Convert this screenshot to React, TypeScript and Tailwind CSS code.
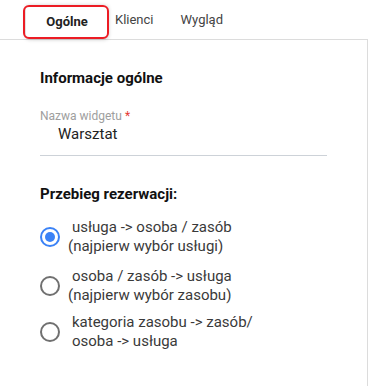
export default function App() {
  return (
    <div className="relative w-[369px] h-[386px] bg-white font-['Roboto',sans-serif] overflow-hidden">
      <div className="flex items-start h-[39px] pl-[26px]">
        <div className="mt-[5px] w-[82px] h-[33px] flex items-center justify-center rounded-[4px] shadow-[0_1px_4px_rgba(0,0,0,0.28)] text-[13px] font-bold text-[#222]">
          Ogólne
        </div>
        <div className="ml-[7px] h-[39px] flex items-center text-[13px] text-[#444]">Klienci</div>
        <div className="ml-[27px] h-[39px] flex items-center text-[13px] text-[#444]">Wygląd</div>
      </div>
      <div className="absolute left-[23px] top-[5px] w-[86px] h-[34px] border-2 border-[#ec1c24] rounded-[6px]" />

      <div className="w-[368px] h-[347px] border-t border-r border-[#dcdcdc] pl-[40px] pt-[28px]">
        <div className="text-[15px] leading-[20px] font-bold text-[#111]">Informacje ogólne</div>

        <div className="mt-[20px] w-[287px] border-b border-[#cdd2d8] pb-[11px]">
          <div className="text-[12px] leading-[16px] text-[#9e9e9e]">
            Nazwa widgetu <span className="text-[#e53935]">*</span>
          </div>
          <div className="ml-[18px] text-[15px] leading-[20px] text-[#222]">Warsztat</div>
        </div>

        <div className="mt-[28px] text-[15px] leading-[20px] font-bold text-[#111]">Przebieg rezerwacji:</div>

        <div className="mt-[14px] flex items-center">
          <div className="w-[20px] h-[20px] rounded-full border-2 border-[#3b82f6] flex items-center justify-center">
            <div className="w-[10px] h-[10px] rounded-full bg-[#3b82f6]" />
          </div>
          <div className="ml-[8px] text-[15px] leading-[19px] text-[#3a3a3a]">
            <div className="ml-[4px]">usługa -&gt; osoba / zasób</div>
            <div>(najpierw wybór usługi)</div>
          </div>
        </div>

        <div className="mt-[11px] flex items-center">
          <div className="w-[20px] h-[20px] rounded-full border-2 border-[#707070]" />
          <div className="ml-[8px] text-[15px] leading-[19px] text-[#3a3a3a]">
            <div className="ml-[4px]">osoba / zasób -&gt; usługa</div>
            <div>(najpierw wybór zasobu)</div>
          </div>
        </div>

        <div className="mt-[8px] flex items-center">
          <div className="w-[20px] h-[20px] rounded-full border-2 border-[#707070]" />
          <div className="ml-[12px] text-[15px] leading-[19px] text-[#3a3a3a]">
            <div>kategoria zasobu -&gt; zasób/</div>
            <div>osoba -&gt; usługa</div>
          </div>
        </div>
      </div>
    </div>
  );
}
